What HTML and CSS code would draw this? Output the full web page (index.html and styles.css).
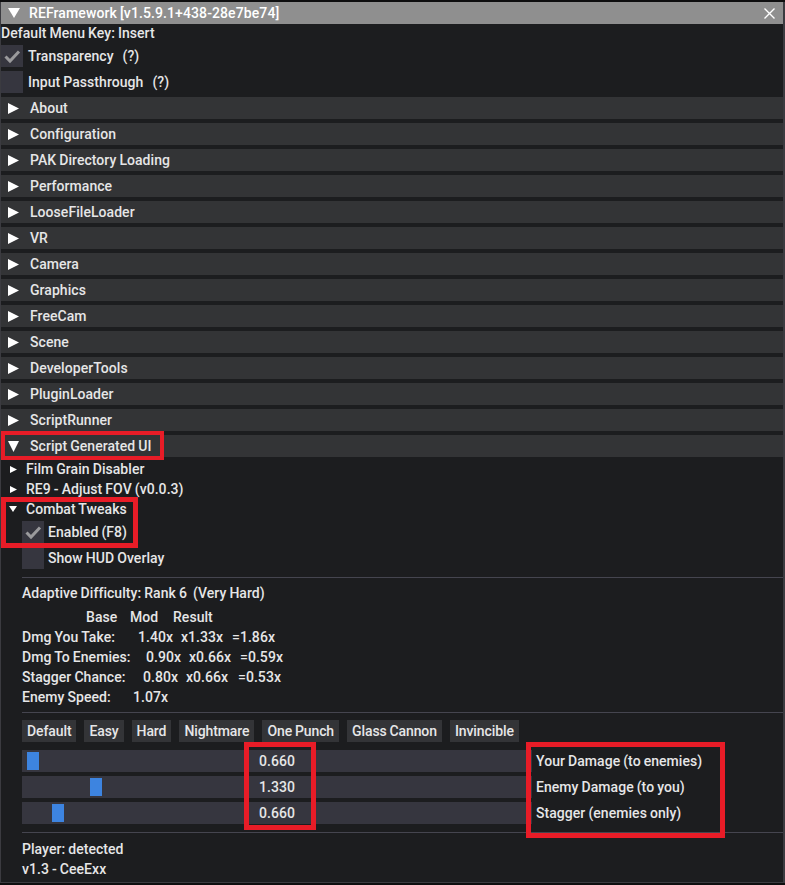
FILE: index.html
```html
<!DOCTYPE html>
<html>
<head>
<meta charset="utf-8">
<link rel="stylesheet" href="styles.css">
</head>
<body>
<div class="window">
  <div class="titlebar">
    <svg class="title-arrow" width="12" height="10" viewBox="0 0 12 10"><polygon points="0,0 12,0 6,10" fill="#fff"/></svg>
    <span class="title-text">REFramework [v1.5.9.1+438-28e7be74]</span>
    <svg class="close" width="11" height="11" viewBox="0 0 11 11"><path d="M0.5 0.5 L10.5 10.5 M10.5 0.5 L0.5 10.5" stroke="#fff" stroke-width="1.4"/></svg>
  </div>
  <div class="content">
    <div class="line first">Default Menu Key: Insert</div>
    <div class="check-row top">
      <span class="box"><svg width="22" height="22" viewBox="0 0 22 22"><path d="M4.5 11.5 L9 16 L18 6.5" fill="none" stroke="#9a9a9c" stroke-width="3"/></svg></span>
      <span class="label">Transparency<span class="help">(?)</span></span>
    </div>
    <div class="check-row top">
      <span class="box"></span>
      <span class="label">Input Passthrough<span class="help">(?)</span></span>
    </div>

    <div class="header"><svg class="harrow" width="11" height="11" viewBox="0 0 11 11"><polygon points="0,0 11,5.5 0,11" fill="#fff"/></svg>About</div>
    <div class="header"><svg class="harrow" width="11" height="11" viewBox="0 0 11 11"><polygon points="0,0 11,5.5 0,11" fill="#fff"/></svg>Configuration</div>
    <div class="header"><svg class="harrow" width="11" height="11" viewBox="0 0 11 11"><polygon points="0,0 11,5.5 0,11" fill="#fff"/></svg>PAK Directory Loading</div>
    <div class="header"><svg class="harrow" width="11" height="11" viewBox="0 0 11 11"><polygon points="0,0 11,5.5 0,11" fill="#fff"/></svg>Performance</div>
    <div class="header"><svg class="harrow" width="11" height="11" viewBox="0 0 11 11"><polygon points="0,0 11,5.5 0,11" fill="#fff"/></svg>LooseFileLoader</div>
    <div class="header"><svg class="harrow" width="11" height="11" viewBox="0 0 11 11"><polygon points="0,0 11,5.5 0,11" fill="#fff"/></svg>VR</div>
    <div class="header"><svg class="harrow" width="11" height="11" viewBox="0 0 11 11"><polygon points="0,0 11,5.5 0,11" fill="#fff"/></svg>Camera</div>
    <div class="header"><svg class="harrow" width="11" height="11" viewBox="0 0 11 11"><polygon points="0,0 11,5.5 0,11" fill="#fff"/></svg>Graphics</div>
    <div class="header"><svg class="harrow" width="11" height="11" viewBox="0 0 11 11"><polygon points="0,0 11,5.5 0,11" fill="#fff"/></svg>FreeCam</div>
    <div class="header"><svg class="harrow" width="11" height="11" viewBox="0 0 11 11"><polygon points="0,0 11,5.5 0,11" fill="#fff"/></svg>Scene</div>
    <div class="header"><svg class="harrow" width="11" height="11" viewBox="0 0 11 11"><polygon points="0,0 11,5.5 0,11" fill="#fff"/></svg>DeveloperTools</div>
    <div class="header"><svg class="harrow" width="11" height="11" viewBox="0 0 11 11"><polygon points="0,0 11,5.5 0,11" fill="#fff"/></svg>PluginLoader</div>
    <div class="header"><svg class="harrow" width="11" height="11" viewBox="0 0 11 11"><polygon points="0,0 11,5.5 0,11" fill="#fff"/></svg>ScriptRunner</div>
    <div class="header marked"><svg class="harrow" width="11" height="11" viewBox="0 0 11 11"><polygon points="0,0 11,0 5.5,11" fill="#fff"/></svg>Script Generated UI<span class="redbox rb-header"></span></div>

    <div class="tree"><svg class="tarrow" width="7" height="7" viewBox="0 0 7 7"><polygon points="0,0 7,3.5 0,7" fill="#fff"/></svg>Film Grain Disabler</div>
    <div class="tree"><svg class="tarrow" width="7" height="7" viewBox="0 0 7 7"><polygon points="0,0 7,3.5 0,7" fill="#fff"/></svg>RE9 - Adjust FOV (v0.0.3)</div>

    <div class="combat">
      <span class="redbox rb-combat"></span>
      <div class="tree"><svg class="tarrow down" width="8" height="6" viewBox="0 0 8 6"><polygon points="0,0 8,0 4,6" fill="#fff"/></svg>Combat Tweaks</div>
      <div class="section">
        <div class="check-row">
          <span class="box"><svg width="22" height="22" viewBox="0 0 22 22"><path d="M4.5 11.5 L9 16 L18 6.5" fill="none" stroke="#9a9a9c" stroke-width="3"/></svg></span>
          <span class="label">Enabled (F8)</span>
        </div>
        <div class="check-row">
          <span class="box"></span>
          <span class="label">Show HUD Overlay</span>
        </div>
        <div class="sep sep-a"></div>
        <div class="line">Adaptive Difficulty: Rank 6  (Very Hard)</div>
        <div class="stats">
          <div class="stat-row"><span class="k k-head"></span><span class="v h1">Base</span><span class="v h2">Mod</span><span class="v">Result</span></div>
          <div class="stat-row"><span class="k k-take">Dmg You Take:</span><span class="v v1">1.40x</span><span class="v v2">x1.33x</span><span class="v">=1.86x</span></div>
          <div class="stat-row"><span class="k k-enemy">Dmg To Enemies:</span><span class="v v1">0.90x</span><span class="v v2">x0.66x</span><span class="v">=0.59x</span></div>
          <div class="stat-row"><span class="k k-stagger">Stagger Chance:</span><span class="v v1">0.80x</span><span class="v v2 v2w">x0.66x</span><span class="v">=0.53x</span></div>
          <div class="stat-row"><span class="k k-speed">Enemy Speed:</span><span class="v">1.07x</span></div>
        </div>
        <div class="sep sep-b"></div>
        <div class="buttons">
          <span class="btn">Default</span>
          <span class="btn">Easy</span>
          <span class="btn">Hard</span>
          <span class="btn">Nightmare</span>
          <span class="btn">One Punch</span>
          <span class="btn">Glass Cannon</span>
          <span class="btn">Invincible</span>
        </div>
        <div class="sliders">
          <div class="slider-row">
            <div class="slider"><span class="grab" style="left:5px"></span><span class="val">0.660</span></div>
            <span class="slabel">Your Damage (to enemies)</span>
          </div>
          <div class="slider-row">
            <div class="slider"><span class="grab" style="left:68px"></span><span class="val">1.330</span></div>
            <span class="slabel">Enemy Damage (to you)</span>
          </div>
          <div class="slider-row">
            <div class="slider"><span class="grab" style="left:30px"></span><span class="val">0.660</span></div>
            <span class="slabel">Stagger (enemies only)</span>
          </div>
          <span class="redbox rb-values"></span>
          <span class="redbox rb-labels"></span>
        </div>
        <div class="sep sep-c"></div>
        <div class="line">Player: detected</div>
        <div class="line">v1.3 - CeeExx</div>
      </div>
    </div>
  </div>
</div>
</body>
</html>
```
FILE: styles.css
```css
html, body {
  margin: 0;
  padding: 0;
  background: #0e0e0f;
}
body {
  width: 785px;
  height: 885px;
  overflow: hidden;
  font-family: Roboto, "Liberation Sans", sans-serif;
  font-size: 14px;
  font-weight: 500;
  letter-spacing: 0.05px;
  word-spacing: -0.5px;
  color: #e6e6e7;
}
.window {
  margin-top: 2px;
  width: 785px;
  height: 881px;
  box-sizing: border-box;
  background: #1c1d1f;
  border-left: 1px solid #3b3b40;
  border-right: 2px solid #3b3b40;
  border-bottom: 1px solid #3b3b40;
  display: flex;
  flex-direction: column;
}
.titlebar {
  height: 22px;
  background: #8f8f8f;
  display: flex;
  align-items: center;
  color: #fff;
  flex-shrink: 0;
}
.title-arrow {
  margin-left: 7px;
  margin-right: 9px;
}
.title-text {
  flex: 1;
  letter-spacing: 0.1px;
}
.close {
  margin-right: 8px;
}
.content {
  display: flex;
  flex-direction: column;
}
.line {
  height: 16px;
  line-height: 16px;
  white-space: pre;
  margin-bottom: 4px;
}
.line.first {
  margin-top: 1px;
}
.check-row {
  display: flex;
  align-items: center;
  height: 22px;
  margin-bottom: 4px;
}
.box {
  width: 22px;
  height: 22px;
  background: #36363f;
  display: block;
}
.box svg {
  display: block;
}
.check-row .label {
  margin-left: 4px;
}
.check-row.top .label {
  margin-left: 5px;
}
.help {
  margin-left: 9px;
}
.header {
  position: relative;
  height: 22px;
  background: #333436;
  display: flex;
  align-items: center;
  margin-bottom: 4px;
}
.harrow {
  margin-left: 7px;
  margin-right: 11px;
}
.tree {
  height: 16px;
  display: flex;
  align-items: center;
  margin-bottom: 4px;
}
.tarrow {
  margin-left: 9px;
  margin-right: 9px;
}
.tarrow.down {
  margin-left: 8px;
  margin-right: 9px;
}
.combat {
  position: relative;
}
.section {
  margin-left: 21px;
  display: flex;
  flex-direction: column;
}
.sep {
  height: 1px;
  background: #45454f;
}
.sep-a {
  margin-top: 4px;
  margin-bottom: 7px;
}
.sep-a + .line {
  margin-bottom: 8px;
}
.stat-row {
  display: flex;
  height: 16px;
  line-height: 16px;
  margin-bottom: 4px;
  white-space: pre;
}
.k-head { width: 64px; }
.k-take { width: 116px; }
.k-enemy { width: 124px; }
.k-stagger { width: 121px; }
.k-speed { width: 111px; }
.h1 { width: 44px; }
.h2 { width: 43px; }
.v1 { width: 43px; }
.v2 { width: 51px; }
.v2w { width: 52px; }
.sep-b {
  margin-top: 3px;
  margin-bottom: 7px;
}
.sep-c {
  margin-top: 8px;
  margin-bottom: 8px;
}
.buttons {
  display: flex;
  gap: 8px;
  margin-bottom: 8px;
}
.btn {
  height: 22px;
  line-height: 22px;
  padding: 0 5px;
  background: #333437;
  letter-spacing: -0.1px;
}
.sliders {
  position: relative;
  display: flex;
  flex-direction: column;
  gap: 4px;
}
.slider-row {
  display: flex;
  align-items: center;
  height: 22px;
}
.slider {
  position: relative;
  width: 510px;
  height: 22px;
  background: #36363f;
  display: flex;
  align-items: center;
  justify-content: center;
}
.grab {
  position: absolute;
  top: 2px;
  width: 12px;
  height: 18px;
  background: #3d84e0;
}
.val {
  position: relative;
}
.slabel {
  margin-left: 4px;
}
.redbox {
  position: absolute;
  box-sizing: border-box;
  border: 5px solid #e81c27;
  pointer-events: none;
}
.rb-header {
  left: 0;
  top: -4px;
  width: 163px;
  height: 29px;
  border-width: 4px;
}
.rb-combat {
  left: 0;
  top: -4px;
  width: 137px;
  height: 51px;
}
.rb-values {
  left: 222px;
  top: -8px;
  width: 72px;
  height: 88px;
}
.rb-labels {
  left: 504px;
  top: -8px;
  width: 199px;
  height: 96px;
}
```
